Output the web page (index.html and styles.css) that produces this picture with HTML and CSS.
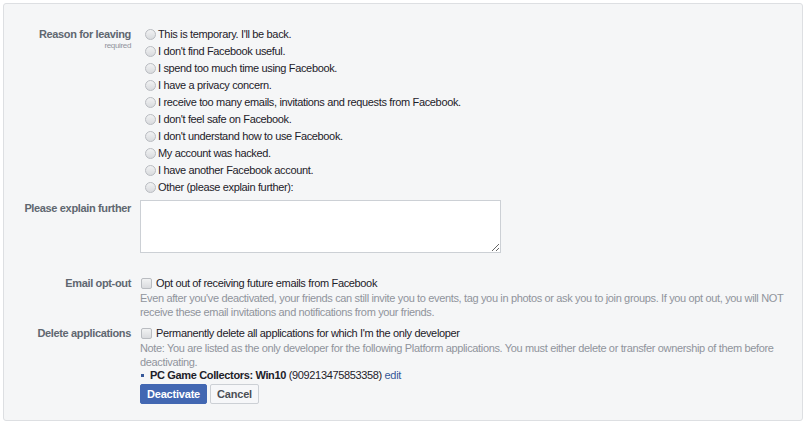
FILE: index.html
```html
<!DOCTYPE html>
<html lang="en">
<head>
    <meta charset="UTF-8">
    <meta name="viewport" content="width=device-width, initial-scale=1.0">
    <title>Deactivate Account</title>
    <link rel="stylesheet" href="styles.css">
</head>
<body>
    <form class="panel">
        <div class="row">
            <div class="label">
                Reason for leaving
                <span class="required">required</span>
            </div>
            <div class="field reasons">
                <label class="option"><input type="radio" name="reason"> This is temporary. I'll be back.</label>
                <label class="option"><input type="radio" name="reason"> I don't find Facebook useful.</label>
                <label class="option"><input type="radio" name="reason"> I spend too much time using Facebook.</label>
                <label class="option"><input type="radio" name="reason"> I have a privacy concern.</label>
                <label class="option"><input type="radio" name="reason"> I receive too many emails, invitations and requests from Facebook.</label>
                <label class="option"><input type="radio" name="reason"> I don't feel safe on Facebook.</label>
                <label class="option"><input type="radio" name="reason"> I don't understand how to use Facebook.</label>
                <label class="option"><input type="radio" name="reason"> My account was hacked.</label>
                <label class="option"><input type="radio" name="reason"> I have another Facebook account.</label>
                <label class="option"><input type="radio" name="reason"> Other (please explain further):</label>
            </div>
        </div>

        <div class="row explain-row">
            <div class="label">Please explain further</div>
            <div class="field">
                <textarea class="explain"></textarea>
            </div>
        </div>

        <div class="row optout-row">
            <div class="label">Email opt-out</div>
            <div class="field">
                <label class="check"><input type="checkbox"> Opt out of receiving future emails from Facebook</label>
                <p class="note">Even after you've deactivated, your friends can still invite you to events, tag you in photos or ask you to join groups. If you opt out, you will NOT receive these email invitations and notifications from your friends.</p>
            </div>
        </div>

        <div class="row apps-row">
            <div class="label">Delete applications</div>
            <div class="field">
                <label class="check"><input type="checkbox"> Permanently delete all applications for which I'm the only developer</label>
                <p class="note">Note: You are listed as the only developer for the following Platform applications. You must either delete or transfer ownership of them before deactivating.</p>
                <ul class="apps">
                    <li><b>PC Game Collectors: Win10</b> (909213475853358) <a href="#">edit</a></li>
                </ul>
                <div class="buttons">
                    <button type="button" class="btn btn-primary">Deactivate</button>
                    <button type="button" class="btn">Cancel</button>
                </div>
            </div>
        </div>
    </form>
</body>
</html>
```

FILE: styles.css
```css
body {
    margin: 0;
    padding: 3px;
    background-color: #fff;
    font-family: "Liberation Sans", Arial, sans-serif;
    font-size: 11px;
    letter-spacing: -0.35px;
    color: #1d2129;
}
.panel {
    width: 800px;
    box-sizing: border-box;
    border: 1px solid #dddfe2;
    border-radius: 3px;
    background-color: #f5f6f7;
    padding: 22px 12px 16px 0;
}
.row {
    display: grid;
    grid-template-columns: 127px 1fr;
    column-gap: 9px;
}
.field {
    max-width: 654px;
}
.label {
    text-align: right;
    font-weight: bold;
    color: #606770;
    line-height: 17px;
}
.required {
    display: block;
    font-size: 8px;
    font-weight: normal;
    color: #90949c;
    line-height: 6px;
}
.option {
    display: flex;
    align-items: center;
    line-height: 17px;
}
.option input {
    -webkit-appearance: none;
    appearance: none;
    width: 11px;
    height: 11px;
    margin: 0 2px 1px 5px;
    border: 1px solid #b9bcc1;
    border-radius: 50%;
    background: linear-gradient(#f1f2f3, #d9dbde);
}
.explain-row {
    margin-top: 4px;
}
.explain {
    display: block;
    width: 361px;
    height: 53px;
    box-sizing: border-box;
    margin: 0;
    border: 1px solid #ccd0d5;
    background: #fff;
    resize: vertical;
}
.optout-row {
    margin-top: 23px;
}
.optout-row .label,
.apps-row .label {
    line-height: 15px;
}
.apps-row {
    margin-top: 7px;
}
.check {
    display: flex;
    align-items: center;
    line-height: 15px;
}
.check input {
    -webkit-appearance: none;
    appearance: none;
    width: 11px;
    height: 11px;
    margin: 0 4px 0 1px;
    border: 1px solid #b9bcc1;
    border-radius: 2px;
    background: linear-gradient(#f1f2f3, #d9dbde);
}
.note {
    margin: 0;
    color: #90949c;
    line-height: 14px;
}
.apps {
    margin: 0;
    padding: 0;
    list-style: none;
    line-height: 12px;
}
.apps li::before {
    content: "";
    display: inline-block;
    width: 3px;
    height: 3px;
    margin: 0 6px 2px 1px;
    background-color: #365899;
    vertical-align: middle;
}
.apps a {
    color: #365899;
    text-decoration: none;
}
.buttons {
    display: flex;
    gap: 3px;
    margin-top: 3px;
}
.btn {
    height: 20px;
    padding: 0 6px;
    border: 1px solid #ccd0d5;
    border-radius: 2px;
    background-color: #f6f7f9;
    color: #4b4f56;
    font-family: inherit;
    font-size: 11px;
    font-weight: bold;
    letter-spacing: -0.2px;
}
.btn-primary {
    background-color: #4267b2;
    border-color: #4267b2;
    color: #fff;
}
```
